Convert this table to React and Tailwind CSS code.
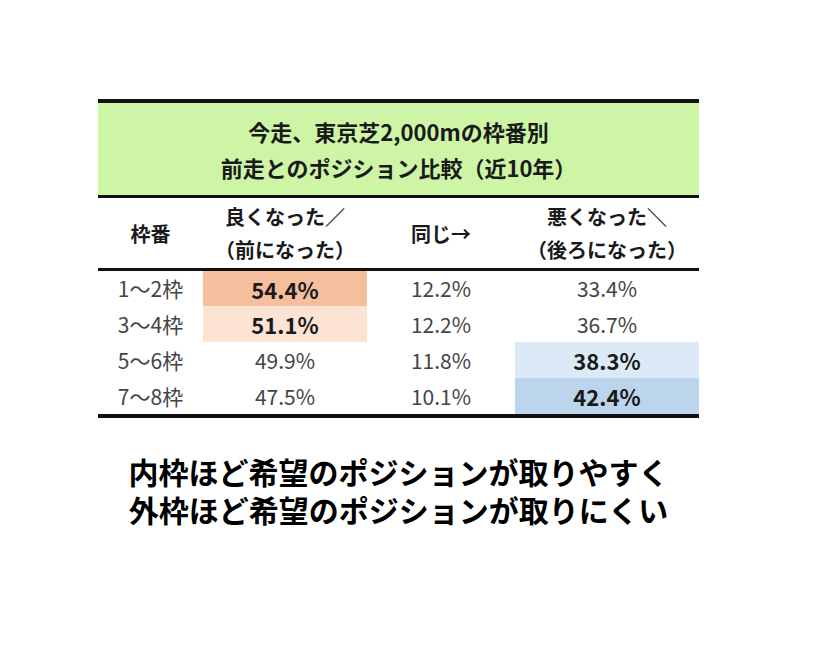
import React from "react";

const JP = { fontFamily: '"Noto Sans CJK JP", "Noto Sans", sans-serif' };

const ROWS = [
  { waku: "1～2枠", better: "54.4%", same: "12.2%", worse: "33.4%", bBg: "bg-[#f5bf9e]", bBold: true },
  { waku: "3～4枠", better: "51.1%", same: "12.2%", worse: "36.7%", bBg: "bg-[#fce3d4]", bBold: true },
  { waku: "5～6枠", better: "49.9%", same: "11.8%", worse: "38.3%", wBg: "bg-[#dce9f6]", wBold: true },
  { waku: "7～8枠", better: "47.5%", same: "10.1%", worse: "42.4%", wBg: "bg-[#bcd5ed]", wBold: true },
];

const COLS = "grid grid-cols-[105px_164px_148px_184px]";

function Cell({ children, bg = "", bold = false }) {
  return (
    <div
      className={
        "flex items-center justify-center " +
        bg +
        (bold ? " text-[22px] font-bold text-[#1a1a1a]" : " text-[21px] font-normal text-[#444]")
      }
    >
      {children}
    </div>
  );
}

export default function App() {
  return (
    <div className="w-[822px] h-[647px] bg-white pt-[99px]" style={JP}>
      <div className="ml-[98px] w-[601px]">
        {/* title */}
        <div className="border-t-4 border-b-[3px] border-[#111] bg-[#cdf5a5] py-[10px] text-center text-[22px] font-bold leading-[36px] text-[#1a1a1a]">
          <div>今走、東京芝2,000mの枠番別</div>
          <div>前走とのポジション比較（近10年）</div>
        </div>

        {/* header */}
        <div className={COLS + " h-[73px] border-b-[3px] border-[#111] text-[20px] font-bold leading-[33px] text-[#1a1a1a]"}>
          <div className="flex items-center justify-center">枠番</div>
          <div className="flex flex-col items-center justify-center">
            <span>良くなった／</span>
            <span>（前になった）</span>
          </div>
          <div className="flex items-center justify-center">同じ→</div>
          <div className="flex flex-col items-center justify-center">
            <span>悪くなった＼</span>
            <span>（後ろになった）</span>
          </div>
        </div>

        {/* rows */}
        <div className="border-b-4 border-[#111] leading-none">
          {ROWS.map((r, i) => (
            <div key={r.waku} className={COLS + (i === 0 ? " h-[35px]" : " h-[36px]")}>
              <Cell>{r.waku}</Cell>
              <Cell bg={r.bBg} bold={r.bBold}>{r.better}</Cell>
              <Cell>{r.same}</Cell>
              <Cell bg={r.wBg} bold={r.wBold}>{r.worse}</Cell>
            </div>
          ))}
        </div>

        {/* conclusion */}
        <div className="mt-[35px] flex flex-col items-center gap-[2px] text-[30px] font-bold leading-[36px] text-black">
          <div>内枠ほど希望のポジションが取りやすく</div>
          <div>外枠ほど希望のポジションが取りにくい</div>
        </div>
      </div>
    </div>
  );
}
